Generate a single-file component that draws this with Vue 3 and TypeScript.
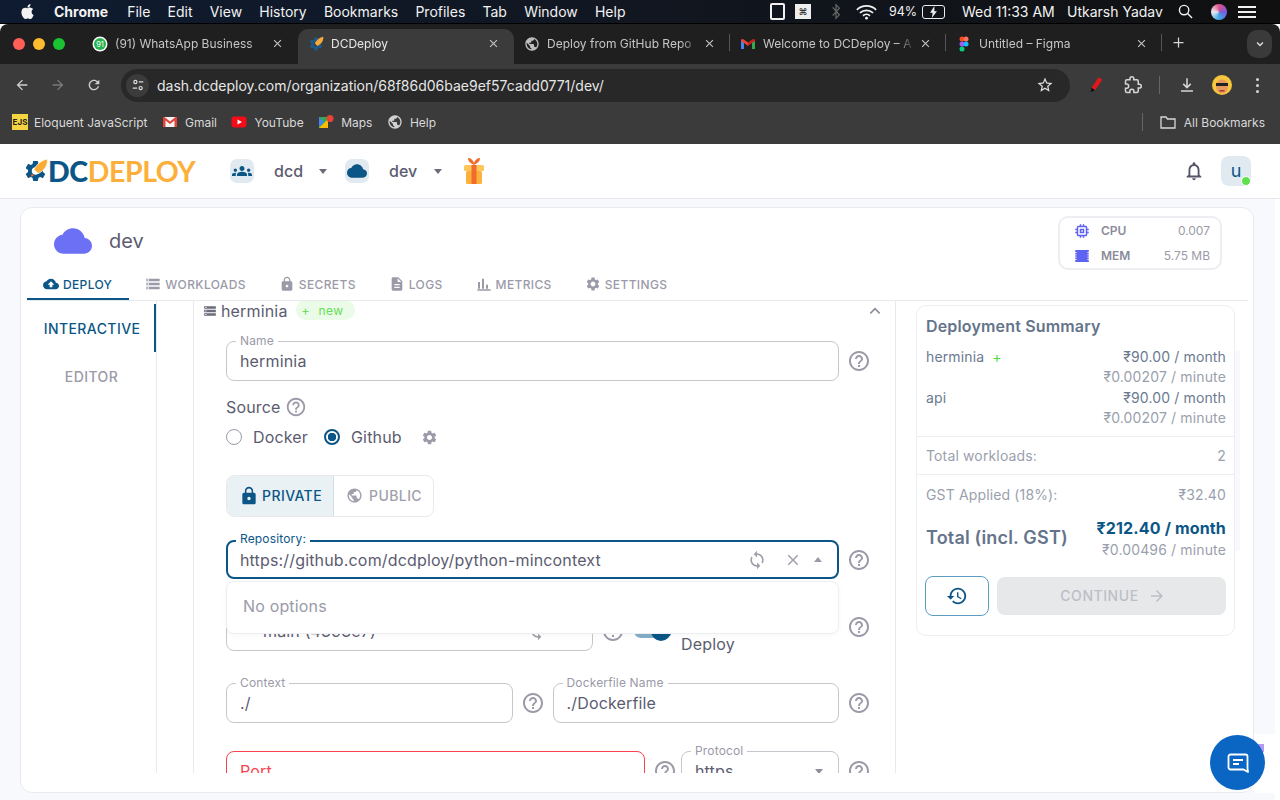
<script setup lang="ts">
const icons = {
  apple: 'M12.152 6.896c-.948 0-2.415-1.078-3.96-1.04-2.04.027-3.91 1.183-4.961 3.014-2.117 3.675-.546 9.103 1.519 12.09 1.013 1.454 2.208 3.09 3.792 3.039 1.52-.065 2.09-.987 3.935-.987 1.831 0 2.35.987 3.96.948 1.637-.026 2.676-1.48 3.676-2.948 1.156-1.688 1.636-3.325 1.662-3.415-.039-.013-3.182-1.221-3.22-4.857-.026-3.04 2.48-4.494 2.597-4.559-1.429-2.09-3.623-2.324-4.39-2.376-2-.156-3.675 1.09-4.61 1.09zM15.53 3.83c.843-1.012 1.4-2.427 1.245-3.83-1.207.052-2.662.805-3.532 1.818-.78.896-1.454 2.338-1.273 3.714 1.338.104 2.715-.688 3.559-1.701',
  cloud: 'M19.35 10.04C18.67 6.59 15.64 4 12 4 9.11 4 6.6 5.64 5.35 8.04 2.34 8.36 0 10.91 0 14c0 3.31 2.69 6 6 6h13c2.76 0 5-2.24 5-5 0-2.64-2.05-4.78-4.65-4.96z',
  groups: 'M12 12.75c1.63 0 3.07.39 4.24.9 1.08.48 1.76 1.56 1.76 2.73V18H6v-1.61c0-1.18.68-2.26 1.76-2.73 1.17-.52 2.61-.91 4.24-.91zM4 13c1.1 0 2-.9 2-2s-.9-2-2-2-2 .9-2 2 .9 2 2 2zm1.13 1.1c-.37-.06-.74-.1-1.13-.1-.99 0-1.93.21-2.78.58C.48 14.9 0 15.62 0 16.43V18h4.5v-1.61c0-.83.23-1.61.63-2.29zM20 13c1.1 0 2-.9 2-2s-.9-2-2-2-2 .9-2 2 .9 2 2 2zm4 3.43c0-.81-.48-1.53-1.22-1.85-.85-.37-1.79-.58-2.78-.58-.39 0-.76.04-1.13.1.4.68.63 1.46.63 2.29V18H24v-1.57zM12 6c1.66 0 3 1.34 3 3s-1.34 3-3 3-3-1.34-3-3 1.34-3 3-3z',
  upload: 'M19.35 10.04C18.67 6.59 15.64 4 12 4 9.11 4 6.6 5.64 5.35 8.04 2.34 8.36 0 10.91 0 14c0 3.31 2.69 6 6 6h13c2.76 0 5-2.24 5-5 0-2.64-2.05-4.78-4.65-4.96zM14 13v4h-4v-4H7l5-5 5 5h-3z',
  storage: 'M2 20h20v-4H2v4zm2-3h2v2H4v-2zM2 4v4h20V4H2zm4 3H4V5h2v2zm-4 7h20v-4H2v4zm2-3h2v2H4v-2z',
  lock: 'M18 8h-1V6c0-2.76-2.24-5-5-5S7 3.24 7 6v2H6c-1.1 0-2 .9-2 2v10c0 1.1.9 2 2 2h12c1.1 0 2-.9 2-2V10c0-1.1-.9-2-2-2zm-6 9c-1.1 0-2-.9-2-2s.9-2 2-2 2 .9 2 2-.9 2-2 2zm3.1-9H8.9V6c0-1.71 1.39-3.1 3.1-3.1 1.71 0 3.1 1.39 3.1 3.1v2z',
  logs: 'M14 2H6c-1.1 0-1.99.9-1.99 2L4 20c0 1.1.89 2 1.99 2H18c1.1 0 2-.9 2-2V8l-6-6zm2 16H8v-2h8v2zm0-4H8v-2h8v2zm-3-5V3.5L18.5 9H13z',
  metrics: 'M2 20h20v2H2zM3 9h3v10H3zM9 4h3v15H9zM15 13h3v6h-3z',
  settings: 'M19.14 12.94c.04-.3.06-.61.06-.94 0-.32-.02-.64-.07-.94l2.03-1.58c.18-.14.23-.41.12-.61l-1.92-3.32c-.12-.22-.37-.29-.59-.22l-2.39.96c-.5-.38-1.03-.7-1.62-.94l-.36-2.54c-.04-.24-.24-.41-.48-.41h-3.84c-.24 0-.43.17-.47.41l-.36 2.54c-.59.24-1.13.57-1.62.94l-2.39-.96c-.22-.08-.47 0-.59.22L2.74 8.87c-.12.21-.08.47.12.61l2.03 1.58c-.05.3-.09.63-.09.94s.02.64.07.94l-2.03 1.58c-.18.14-.23.41-.12.61l1.92 3.32c.12.22.37.29.59.22l2.39-.96c.5.38 1.03.7 1.62.94l.36 2.54c.05.24.24.41.48.41h3.84c.24 0 .44-.17.47-.41l.36-2.54c.59-.24 1.13-.56 1.62-.94l2.39.96c.22.08.47 0 .59-.22l1.92-3.32c.12-.22.07-.47-.12-.61l-2.01-1.58zM12 15.6c-1.98 0-3.6-1.62-3.6-3.6s1.62-3.6 3.6-3.6 3.6 1.62 3.6 3.6-1.62 3.6-3.6 3.6z',
  help: 'M11 18h2v-2h-2v2zm1-16C6.48 2 2 6.48 2 12s4.48 10 10 10 10-4.48 10-10S17.52 2 12 2zm0 18c-4.41 0-8-3.59-8-8s3.59-8 8-8 8 3.59 8 8-3.59 8-8 8zm0-14c-2.21 0-4 1.79-4 4h2c0-1.1.9-2 2-2s2 .9 2 2c0 2-3 1.75-3 5h2c0-2.25 3-2.5 3-5 0-2.21-1.79-4-4-4z',
  globe: 'M12 2C6.48 2 2 6.48 2 12s4.48 10 10 10 10-4.48 10-10S17.52 2 12 2zm-1 17.93c-3.95-.49-7-3.85-7-7.93 0-.62.08-1.21.21-1.79L9 15v1c0 1.1.9 2 2 2v1.93zm6.9-2.54c-.26-.81-1-1.39-1.9-1.39h-1v-3c0-.55-.45-1-1-1H8v-2h2c.55 0 1-.45 1-1V7h2c1.1 0 2-.9 2-2v-.41c2.93 1.19 5 4.06 5 7.41 0 2.08-.8 3.97-2.1 5.39z',
  history: 'M13 3c-4.97 0-9 4.03-9 9H1l3.89 3.89.07.14L9 12H6c0-3.87 3.13-7 7-7s7 3.13 7 7-3.13 7-7 7c-1.93 0-3.68-.79-4.94-2.06l-1.42 1.42C8.27 19.99 10.51 21 13 21c4.97 0 9-4.03 9-9s-4.03-9-9-9zm-1 5v5l4.28 2.54.72-1.21-3.5-2.08V8H12z',
  sync: 'M12 4V1L8 5l4 4V6c3.31 0 6 2.69 6 6 0 1.01-.25 1.97-.7 2.8l1.46 1.46C19.54 15.03 20 13.57 20 12c0-4.42-3.58-8-8-8zm0 14c-3.31 0-6-2.69-6-6 0-1.01.25-1.97.7-2.8L5.24 7.74C4.46 8.97 4 10.43 4 12c0 4.42 3.58 8 8 8v3l4-4-4-4v3z',
  bell: 'M12 22c1.1 0 2-.9 2-2h-4c0 1.1.9 2 2 2zm6-6v-5c0-3.07-1.63-5.64-4.5-6.32V4c0-.83-.67-1.5-1.5-1.5s-1.5.67-1.5 1.5v.68C7.64 5.36 6 7.92 6 11v5l-2 2v1h16v-1l-2-2zm-2 1H8v-6c0-2.48 1.51-4.5 4-4.5s4 2.02 4 4.5v6z',
  close: 'M19 6.41 17.59 5 12 10.59 6.41 5 5 6.41 10.59 12 5 17.59 6.41 19 12 13.41 17.59 19 19 17.59 13.41 12z',
  arrow: 'M12 4l-1.41 1.41L16.17 11H4v2h12.17l-5.58 5.59L12 20l8-8z',
  cpu: 'M15 9H9v6h6V9zm-2 4h-2v-2h2v2zm8-2V9h-2V7c0-1.1-.9-2-2-2h-2V3h-2v2h-2V3H9v2H7c-1.1 0-2 .9-2 2v2H3v2h2v2H3v2h2v2c0 1.1.9 2 2 2h2v2h2v-2h2v2h2v-2h2c1.1 0 2-.9 2-2v-2h2v-2h-2v-2h2zm-4 6H7V7h10v10z',
  mem: 'M3 4h18v3h-2v1h2v2h-2v1h2v2h-2v1h2v2h-2v1h2v3H3v-3h2v-1H3v-2h2v-1H3v-2h2v-1H3V8h2V7H3z',
  star: 'M22 9.24l-7.19-.62L12 2 9.19 8.63 2 9.24l5.46 4.73L5.82 21 12 17.27 18.18 21l-1.63-7.03L22 9.24zM12 15.4l-3.76 2.27 1-4.28-3.32-2.88 4.38-.38L12 6.1l1.71 4.04 4.38.38-3.32 2.88 1 4.28L12 15.4z',
  back: 'M20 11H7.83l5.59-5.59L12 4l-8 8 8 8 1.41-1.41L7.83 13H20v-2z',
  reload: 'M17.65 6.35C16.2 4.9 14.21 4 12 4c-4.42 0-7.99 3.58-7.99 8s3.57 8 7.99 8c3.73 0 6.84-2.55 7.73-6h-2.08c-.82 2.33-3.04 4-5.65 4-3.31 0-6-2.69-6-6s2.69-6 6-6c1.66 0 3.14.69 4.22 1.78L13 11h7V4l-2.35 2.35z',
  ext: 'M20.5 11H19V7c0-1.1-.9-2-2-2h-4V3.5C13 2.12 11.88 1 10.5 1S8 2.12 8 3.5V5H4c-1.1 0-1.99.9-1.99 2v3.8H3.5c1.49 0 2.7 1.21 2.7 2.7s-1.21 2.7-2.7 2.7H2V20c0 1.1.9 2 2 2h3.8v-1.5c0-1.49 1.21-2.7 2.7-2.7 1.49 0 2.7 1.21 2.7 2.7V22H17c1.1 0 2-.9 2-2v-4h1.5c1.38 0 2.5-1.12 2.5-2.5S21.88 11 20.5 11z',
}

const menus = ['File', 'Edit', 'View', 'History', 'Bookmarks', 'Profiles', 'Tab', 'Window', 'Help']

const chromeTabs = [
  { title: '(91) WhatsApp Business', kind: 'wa', active: false },
  { title: 'DCDeploy', kind: 'dc', active: true },
  { title: 'Deploy from GitHub Repo', kind: 'globe', active: false },
  { title: 'Welcome to DCDeploy – A', kind: 'gmail', active: false },
  { title: 'Untitled – Figma', kind: 'figma', active: false },
]

const navTabs = [
  { label: 'DEPLOY', icon: icons.upload, active: true },
  { label: 'WORKLOADS', icon: icons.storage, active: false },
  { label: 'SECRETS', icon: icons.lock, active: false },
  { label: 'LOGS', icon: icons.logs, active: false },
  { label: 'METRICS', icon: icons.metrics, active: false },
  { label: 'SETTINGS', icon: icons.settings, active: false },
]
</script>

<template>
  <div class="screen">
    <div class="mac-bar">
      <svg class="apple" viewBox="0 0 24 24"><path :d="icons.apple" /></svg>
      <strong class="mac-app">Chrome</strong>
      <span v-for="m in menus" :key="m" class="mac-menu">{{ m }}</span>
      <div class="mac-right">
        <span class="mac-rect"></span>
        <span class="mac-cmd">⌘</span>
        <svg class="mac-bt" viewBox="0 0 12 20"><path d="M2 5l8 9-4 4V2l4 4-8 9" /></svg>
        <svg class="mac-wifi" viewBox="0 0 24 18"><path d="M1 6.5a16 16 0 0 1 22 0M4.5 10a11 11 0 0 1 15 0M8 13.3a6 6 0 0 1 8 0" /><circle cx="12" cy="16" r="1.6" /></svg>
        <span class="mac-pct">94%</span>
        <span class="mac-batt"><svg viewBox="0 0 10 14"><path d="M6 0L1 8h3l-1 6 6-8H6z" /></svg></span>
        <span class="mac-time">Wed 11:33 AM</span>
        <span class="mac-user">Utkarsh Yadav</span>
        <svg class="mac-search" viewBox="0 0 16 16"><circle cx="6.5" cy="6.5" r="5" /><path d="M10.2 10.2L15 15" /></svg>
        <span class="mac-siri"></span>
        <span class="mac-ctrl"><i></i><i></i><i></i></span>
      </div>
    </div>

    <div class="tab-strip">
      <div class="lights"><i class="red"></i><i class="amber"></i><i class="green"></i></div>
      <div v-for="t in chromeTabs" :key="t.title" class="ctab" :class="{ active: t.active }">
        <svg v-if="t.kind === 'wa'" class="fav" viewBox="0 0 16 16">
          <circle cx="8" cy="8" r="7.5" fill="#fff" />
          <circle cx="8" cy="8" r="6" fill="#25b34b" />
          <text x="8" y="10.6" class="fav-num">91</text>
        </svg>
        <svg v-else-if="t.kind === 'dc'" class="fav" viewBox="0 0 24 24">
          <path :d="icons.settings" fill="#1c5a8c" />
          <path d="M23 1c.5 6-3 11-9 14l-4-4C13 6 17 2 23 1z" fill="#f5a93a" />
        </svg>
        <svg v-else-if="t.kind === 'globe'" class="fav" viewBox="0 0 24 24"><path :d="icons.globe" fill="#bdbdbd" /></svg>
        <svg v-else-if="t.kind === 'gmail'" class="fav" viewBox="0 0 16 16">
          <path d="M1 3.500V13h3V7l4 3V6.500L3 3z" fill="#ea4335" />
          <path d="M15 3.500V13h-3V7L8 10V6.500L13 3z" fill="#c5221f" />
          <path d="M1 13V5l3 2v6z" fill="#4285f4" />
          <path d="M15 13V5l-3 2v6z" fill="#34a853" />
        </svg>
        <svg v-else class="fav" viewBox="0 0 16 16">
          <circle cx="6" cy="3" r="2.500" fill="#f24e1e" />
          <circle cx="10" cy="3" r="2.500" fill="#ff7262" />
          <circle cx="6" cy="8" r="2.500" fill="#a259ff" />
          <circle cx="10" cy="8" r="2.500" fill="#1abcfe" />
          <circle cx="6" cy="13" r="2.500" fill="#0acf83" />
        </svg>
        <span class="ctab-title">{{ t.title }}</span>
        <svg class="ctab-close" viewBox="0 0 24 24"><path :d="icons.close" /></svg>
        <span v-if="!t.active && t.kind !== 'wa'" class="ctab-sep"></span>
      </div>
      <svg class="ctab-plus" viewBox="0 0 24 24"><path d="M11 4h2v7h7v2h-7v7h-2v-7H4v-2h7z" /></svg>
      <span class="ctab-more"><svg viewBox="0 0 24 24"><path d="M7 9.500l5 5 5-5" /></svg></span>
    </div>

    <div class="toolbar">
      <svg class="tool-ic" viewBox="0 0 24 24"><path :d="icons.back" /></svg>
      <svg class="tool-ic dim" viewBox="0 0 24 24"><path :d="icons.back" transform="rotate(180 12 12)" /></svg>
      <svg class="tool-ic" viewBox="0 0 24 24"><path :d="icons.reload" /></svg>
      <div class="url">
        <span class="url-tune"><svg viewBox="0 0 16 16"><circle cx="5" cy="4.500" r="1.800" /><path d="M9 4.500h5M2 11.500h5" /><circle cx="11" cy="11.500" r="1.800" /></svg></span>
        <span class="url-text">dash.dcdeploy.com/organization/68f86d06bae9ef57cadd0771/dev/</span>
        <svg class="url-star" viewBox="0 0 24 24"><path :d="icons.star" /></svg>
      </div>
      <svg class="pen" viewBox="0 0 16 20"><path d="M11 1l4 3-8 12-4-3z" fill="#e3161c" /><path d="M3 13l4 3-5 2z" fill="#111" /></svg>
      <svg class="tool-ic ext" viewBox="0 0 24 24"><path :d="icons.ext" fill="none" stroke="#d6d6d6" stroke-width="2" /></svg>
      <span class="tool-sep"></span>
      <svg class="tool-ic dl" viewBox="0 0 24 24"><path d="M12 3v12M7 10.500l5 5 5-5M4 20h16" fill="none" stroke="#d6d6d6" stroke-width="2" /></svg>
      <svg class="avatar-pic" viewBox="0 0 20 20">
        <circle cx="10" cy="10" r="10" fill="#f6c63e" />
        <ellipse cx="10" cy="11.500" rx="6" ry="7" fill="#e89a5c" />
        <path d="M4 8h12v3H4z" fill="#222" />
        <path d="M7.500 15h5v1.500h-5z" fill="#a33" />
      </svg>
      <span class="tool-dots"><i></i><i></i><i></i></span>
    </div>

    <div class="bookmarks">
      <span class="bm"><span class="ejs">EJS</span>Eloquent JavaScript</span>
      <span class="bm"><svg class="bm-ic" viewBox="0 0 16 16"><path d="M1 3h14v10H1z" fill="#f4f4f4" /><path d="M1 3v10h2.500V6.500L8 10l4.500-3.500V13H15V3h-1.500L8 7.500 2.500 3z" fill="#e0443a" /></svg>Gmail</span>
      <span class="bm"><svg class="bm-ic" viewBox="0 0 16 16"><rect x="0.500" y="2.500" width="15" height="11" rx="3" fill="#f40d18" /><path d="M6.500 5.500L11 8l-4.500 2.500z" fill="#fff" /></svg>YouTube</span>
      <span class="bm"><svg class="bm-ic" viewBox="0 0 16 16"><path d="M1 3h9v11H1z" fill="#34a853" /><path d="M1 14l9-9v9z" fill="#fbbc04" /><path d="M1 3l5 5-5 5z" fill="#4285f4" /><circle cx="12" cy="4.500" r="3.500" fill="#ea4335" /></svg>Maps</span>
      <span class="bm"><svg class="bm-ic" viewBox="0 0 24 24"><path :d="icons.globe" fill="#d0d0d0" /></svg>Help</span>
      <span class="bm-sep"></span>
      <span class="bm all"><svg class="bm-folder" viewBox="0 0 16 14"><path d="M1 2h5l1.500 2H15v9H1z" /></svg>All Bookmarks</span>
    </div>

    <div class="page">
      <header class="app-head">
        <div class="logo">
          <svg class="logo-mark" viewBox="0 0 24 24">
            <path :d="icons.settings" fill="#0b5686" />
            <path d="M23.500 0.500c.5 6-3 11-9 14l-4-4c3-5 7-9 13-10z" fill="#f9ab32" stroke="#fff" stroke-width="0.800" />
            <path d="M7.500 17.500l3-1-2-2z" fill="#f26d21" />
          </svg>
          <span class="logo-text"><b>DC</b><em>DEPLOY</em></span>
        </div>
        <span class="chip first"><svg viewBox="0 0 24 24"><path :d="icons.groups" /></svg></span>
        <span class="org">dcd</span>
        <span class="caret"></span>
        <span class="chip"><svg viewBox="0 0 24 24"><path :d="icons.cloud" /></svg></span>
        <span class="org">dev</span>
        <span class="caret"></span>
        <svg class="gift" viewBox="0 0 22 28">
          <path d="M11 8C8 6 5 5 5 1c3 0 5 2 6 5 1-3 3-5 6-5 0 4-3 5-6 7z" fill="#f26b2a" />
          <rect x="1" y="8" width="20" height="6" rx="1.500" fill="#fbc65a" />
          <rect x="3" y="14" width="16" height="13" rx="1.500" fill="#fbb13c" />
          <rect x="8.500" y="8" width="5" height="19" fill="#f26b2a" />
        </svg>
        <svg class="bell" viewBox="0 0 24 24"><path :d="icons.bell" /></svg>
        <span class="user">u<i></i></span>
      </header>

      <section class="card">
        <div class="card-top">
          <svg class="env-cloud" viewBox="0 0 24 24"><path :d="icons.cloud" /></svg>
          <span class="env-name">dev</span>
          <div class="usage">
            <svg viewBox="0 0 24 24"><path :d="icons.cpu" /></svg>
            <b>CPU</b>
            <span>0.007</span>
            <svg viewBox="0 0 24 24"><path :d="icons.mem" /></svg>
            <b>MEM</b>
            <span>5.75 MB</span>
          </div>
        </div>

        <nav class="nav-tabs">
          <div v-for="t in navTabs" :key="t.label" class="nav-tab" :class="{ active: t.active }">
            <svg viewBox="0 0 24 24"><path :d="t.icon" /></svg>
            {{ t.label }}
          </div>
        </nav>

        <div class="body">
          <aside class="side">
            <div class="side-item active">INTERACTIVE</div>
            <div class="side-item">EDITOR</div>
          </aside>

          <div class="form-col">
            <div class="form-inner">
              <div class="wl-head">
                <svg class="wl-ic" viewBox="0 0 24 24"><path :d="icons.storage" /></svg>
                <span>herminia</span>
                <span class="badge"><i>+</i> new</span>
                <svg class="wl-up" viewBox="0 0 24 24"><path d="M5 15.500l7-7 7 7" /></svg>
              </div>

              <div class="form">
                <div class="row name-row">
                  <div class="field"><label>Name</label>herminia</div>
                  <svg class="help" viewBox="0 0 24 24"><path :d="icons.help" /></svg>
                </div>

                <div class="source">
                  Source
                  <svg class="help" viewBox="0 0 24 24"><path :d="icons.help" /></svg>
                </div>
                <div class="radios">
                  <span class="radio"></span><span class="radio-label">Docker</span>
                  <span class="radio on"></span><span class="radio-label">Github</span>
                  <svg class="radio-gear" viewBox="0 0 24 24"><path :d="icons.settings" /></svg>
                </div>

                <div class="vis">
                  <div class="vis-btn on"><svg viewBox="0 0 24 24"><path :d="icons.lock" /></svg>PRIVATE</div>
                  <div class="vis-btn"><svg viewBox="0 0 24 24"><path :d="icons.globe" /></svg>PUBLIC</div>
                </div>

                <div class="row repo-row">
                  <div class="field focus">
                    <label>Repository:</label>
                    <span class="val">https://github.com/dcdploy/python-mincontext</span>
                    <svg class="f-ic sync" viewBox="0 0 24 24"><path :d="icons.sync" /></svg>
                    <svg class="f-ic x" viewBox="0 0 24 24"><path :d="icons.close" /></svg>
                    <span class="caret up"></span>
                  </div>
                  <svg class="help" viewBox="0 0 24 24"><path :d="icons.help" /></svg>
                  <div class="dropdown">No options</div>
                </div>

                <div class="row branch-row">
                  <div class="field branch">
                    <span class="branch-dot"></span>
                    <span class="val">main (4393e7)</span>
                    <svg class="f-ic sync" viewBox="0 0 24 24"><path :d="icons.sync" /></svg>
                    <span class="caret light"></span>
                  </div>
                  <svg class="help" viewBox="0 0 24 24"><path :d="icons.help" /></svg>
                  <span class="toggle"><i></i></span>
                  <span class="auto">Auto<br />Deploy</span>
                  <svg class="help end" viewBox="0 0 24 24"><path :d="icons.help" /></svg>
                </div>

                <div class="row ctx-row">
                  <div class="field"><label>Context</label>./</div>
                  <svg class="help" viewBox="0 0 24 24"><path :d="icons.help" /></svg>
                  <div class="field"><label>Dockerfile Name</label>./Dockerfile</div>
                  <svg class="help" viewBox="0 0 24 24"><path :d="icons.help" /></svg>
                </div>

                <div class="row port-row">
                  <div class="field error"><span class="val">Port</span></div>
                  <svg class="help" viewBox="0 0 24 24"><path :d="icons.help" /></svg>
                  <div class="field proto">
                    <label>Protocol</label>
                    <span class="val">https</span>
                    <span class="caret"></span>
                  </div>
                  <svg class="help" viewBox="0 0 24 24"><path :d="icons.help" /></svg>
                </div>
              </div>
            </div>
          </div>

          <aside class="summary">
            <h4>Deployment Summary</h4>
            <div class="s-list">
              <div class="s-item">
                <span>herminia <i class="plus">+</i></span>
                <div class="s-price"><span>₹90.00 / month</span><small>₹0.00207 / minute</small></div>
              </div>
              <div class="s-item">
                <span>api</span>
                <div class="s-price"><span>₹90.00 / month</span><small>₹0.00207 / minute</small></div>
              </div>
            </div>
            <div class="s-line"><span>Total workloads:</span><span>2</span></div>
            <div class="s-gst"><span>GST Applied (18%):</span><span>₹32.40</span></div>
            <div class="s-total">
              <b>Total (incl. GST)</b>
              <div class="s-price"><strong>₹212.40 / month</strong><small>₹0.00496 / minute</small></div>
            </div>
            <div class="s-actions">
              <button class="hist"><svg viewBox="0 0 24 24"><path :d="icons.history" /></svg></button>
              <button class="cont">CONTINUE<svg viewBox="0 0 24 24"><path :d="icons.arrow" /></svg></button>
            </div>
            <span class="s-scroll"></span>
          </aside>
        </div>
      </section>

      <div class="chat-back"></div>
      <button class="chat">
        <svg viewBox="0 0 24 24"><path d="M4.500 3.500h15a2 2 0 0 1 2 2v12l.5 3.500-4.500-2.500h-13a2 2 0 0 1-2-2v-11a2 2 0 0 1 2-2z" /><path d="M7 9h10M7 13h6" /></svg>
      </button>
    </div>
  </div>
</template>

<style>
html,
body {
  margin: 0;
  overflow: hidden;
  background: #fff;
}
</style>

<style scoped>
.screen {
  width: 1280px;
  height: 800px;
  display: flex;
  flex-direction: column;
  overflow: hidden;
  font-family: Inter, "Liberation Sans", sans-serif;
}

/* mac menu bar */
.mac-bar {
  height: 23px;
  flex: none;
  display: flex;
  align-items: center;
  padding-left: 20px;
  background: linear-gradient(90deg, #0e1b30 0%, #111722 45%, #101010 100%);
  color: #f2f2f2;
  font-size: 14px;
  border-bottom: 1px solid #000;
}
.apple {
  width: 15px;
  height: 17px;
  fill: #f2f2f2;
  margin-right: 19px;
}
.mac-app {
  font-weight: 700;
  margin-right: 19px;
}
.mac-menu {
  margin-right: 17.200px;
}
.mac-right {
  margin-left: auto;
  display: flex;
  align-items: center;
  height: 100%;
}
.mac-rect {
  width: 11px;
  height: 13px;
  border: 2px solid #f2f2f2;
  border-radius: 2px;
  margin-right: 10px;
}
.mac-cmd {
  width: 16px;
  height: 15px;
  background: #eee;
  color: #222;
  font-size: 9px;
  line-height: 16px;
  text-align: center;
  margin-right: 20px;
}
.mac-bt {
  width: 10px;
  height: 17px;
  fill: none;
  stroke: #666;
  stroke-width: 1.500;
  margin-right: 15px;
}
.mac-wifi {
  width: 21px;
  height: 16px;
  fill: none;
  stroke: #f2f2f2;
  stroke-width: 2;
  margin-right: 12px;
}
.mac-wifi circle {
  fill: #f2f2f2;
  stroke: none;
}
.mac-pct {
  font-size: 12.500px;
  margin-right: 5px;
}
.mac-batt {
  width: 21px;
  height: 12px;
  border: 1px solid #eee;
  border-radius: 3px;
  margin-right: 17px;
  display: flex;
  justify-content: center;
  align-items: center;
}
.mac-batt svg {
  width: 9px;
  height: 12px;
  fill: #eee;
}
.mac-time {
  margin-right: 14px;
  width: 91px;
  white-space: nowrap;
}
.mac-user {
  margin-right: 17px;
  width: 94px;
  white-space: nowrap;
}
.mac-search {
  width: 15px;
  height: 15px;
  fill: none;
  stroke: #f2f2f2;
  stroke-width: 1.500;
  margin-right: 18px;
}
.mac-siri {
  width: 16px;
  height: 16px;
  border-radius: 50%;
  background: conic-gradient(#e0508a, #7a5be0, #3fa7e8, #e8e8f0, #e0508a);
  margin-right: 11px;
}
.mac-ctrl {
  width: 18px;
  margin-right: 24px;
  display: flex;
  flex-direction: column;
  gap: 3px;
}
.mac-ctrl i {
  display: block;
  height: 2px;
  background: #f2f2f2;
}

/* chrome */
.tab-strip {
  height: 35px;
  flex: none;
  padding-top: 5px;
  background: #1f1f1f;
  display: flex;
  align-items: stretch;
  position: relative;
  border-radius: 8px 8px 0 0;
}
.lights {
  width: 82px;
  flex: none;
  display: flex;
  align-items: center;
  gap: 8px;
  padding-left: 13px;
  box-sizing: border-box;
  margin-top: -5px;
}
.lights i {
  width: 12px;
  height: 12px;
  border-radius: 50%;
}
.red {
  background: #ff5f57;
}
.amber {
  background: #febc2e;
}
.green {
  background: #19c332;
}
.ctab {
  width: 216px;
  flex: none;
  box-sizing: border-box;
  display: flex;
  align-items: center;
  padding: 0 12px 6px 10px;
  position: relative;
  color: #c6c6c6;
  font-size: 12px;
  border-radius: 10px 10px 0 0;
}
.ctab.active {
  background: #3b3b3b;
  color: #e8e8e8;
}
.fav {
  width: 16px;
  height: 16px;
  flex: none;
}
.fav-num {
  font-size: 7.500px;
  fill: #fff;
  text-anchor: middle;
  font-family: Inter, sans-serif;
}
.ctab-title {
  margin-left: 7px;
  width: 152px;
  white-space: nowrap;
  overflow: hidden;
  -webkit-mask-image: linear-gradient(90deg, #000 88%, transparent);
  mask-image: linear-gradient(90deg, #000 88%, transparent);
}
.ctab-close {
  width: 13px;
  height: 13px;
  margin-left: 4px;
  fill: #c6c6c6;
}
.ctab-sep {
  position: absolute;
  right: 0;
  top: 5px;
  height: 17px;
  width: 1px;
  background: #555;
}
.ctab-plus {
  width: 15px;
  height: 15px;
  margin: 6px 0 0 9px;
  fill: #d6d6d6;
}
.ctab-more {
  position: absolute;
  right: 8px;
  top: 6px;
  width: 25px;
  height: 28px;
  border-radius: 10px;
  background: #3a3a3a;
  display: flex;
  align-items: center;
  justify-content: center;
}
.ctab-more svg {
  width: 14px;
  height: 14px;
  fill: none;
  stroke: #ddd;
  stroke-width: 2.500;
}

.toolbar {
  height: 42px;
  flex: none;
  background: #3b3b3b;
  display: flex;
  align-items: center;
  padding: 0 14px 0 14px;
  box-sizing: border-box;
}
.tool-ic {
  width: 16px;
  height: 16px;
  margin-right: 20px;
  fill: #cfcfcf;
  flex: none;
}
.tool-ic.dim {
  fill: #7b7b7b;
}
.url {
  width: 949px;
  flex: none;
  height: 33px;
  margin-left: -1px;
  border-radius: 17px;
  background: #282828;
  display: flex;
  align-items: center;
  padding: 0 16px 0 5px;
  box-sizing: border-box;
}
.url-tune {
  width: 23px;
  height: 23px;
  border-radius: 50%;
  background: #3b3b3b;
  display: flex;
  align-items: center;
  justify-content: center;
  margin-right: 8px;
}
.url-tune svg {
  width: 14px;
  height: 14px;
  fill: none;
  stroke: #ddd;
  stroke-width: 1.400;
}
.url-text {
  color: #e6e6e6;
  font-size: 14px;
  flex: 1;
  white-space: nowrap;
}
.url-star {
  width: 18px;
  height: 18px;
  fill: #e0e0e0;
}
.pen {
  width: 14px;
  height: 18px;
  margin-left: 19px;
}
.tool-ic.ext {
  margin: 0 0 0 21px;
  width: 18px;
  height: 18px;
}
.tool-sep {
  width: 1px;
  height: 18px;
  background: #666;
  margin: 0 18px 0 17px;
}
.tool-ic.dl {
  width: 18px;
  height: 18px;
  margin-right: 16px;
}
.avatar-pic {
  width: 20px;
  height: 20px;
  margin-right: 24px;
}
.tool-dots {
  display: flex;
  flex-direction: column;
  gap: 3px;
}
.tool-dots i {
  width: 3px;
  height: 3px;
  border-radius: 50%;
  background: #d6d6d6;
}

.bookmarks {
  height: 38px;
  flex: none;
  background: #3b3b3b;
  display: flex;
  align-items: center;
  padding: 0 15px 6px 12px;
  box-sizing: border-box;
  color: #d9d9d9;
  font-size: 12px;
}
.bm {
  display: flex;
  align-items: center;
  margin-right: 14.500px;
  white-space: nowrap;
}
.ejs {
  width: 16px;
  height: 16px;
  background: #f5d442;
  color: #222;
  font-size: 8px;
  font-weight: 700;
  line-height: 16px;
  text-align: center;
  margin-right: 6px;
}
.bm-ic {
  width: 16px;
  height: 16px;
  margin-right: 7px;
}
.bm-sep {
  width: 1px;
  height: 18px;
  background: #666;
  margin-left: auto;
  margin-right: 17px;
}
.bm.all {
  margin-right: 0;
}
.bm-folder {
  width: 16px;
  height: 14px;
  fill: none;
  stroke: #d9d9d9;
  stroke-width: 1.300;
  margin-right: 8px;
}

/* dcdeploy page */
.page {
  flex: 1;
  min-height: 0;
  background: #f8f9fc;
  margin-right: 5px;
  position: relative;
}
.app-head {
  height: 54px;
  margin-right: -5px;
  background: #fff;
  border-bottom: 1px solid #e5e7eb;
  display: flex;
  align-items: center;
  padding: 0 29px 0 24px;
  color: #5c5c70;
}
.logo {
  width: 206px;
  flex: none;
  display: flex;
  align-items: center;
}
.logo-mark {
  width: 25px;
  height: 26px;
  margin-left: -1px;
  flex: none;
}
.logo-text {
  font-family: Lato, Inter, sans-serif;
  font-size: 28.500px;
  letter-spacing: -0.400px;
  line-height: 30px;
  white-space: nowrap;
}
.logo-text b {
  font-weight: 900;
  color: #0b5686;
}
.logo-text em {
  font-style: normal;
  font-weight: 700;
  color: #fbb03b;
}
.chip {
  width: 24px;
  height: 24px;
  border-radius: 7px;
  background: #e1eaf0;
  display: flex;
  align-items: center;
  justify-content: center;
  margin-left: 18px;
  flex: none;
}
.chip.first {
  margin-left: 0;
}
.chip svg {
  width: 20px;
  height: 20px;
  fill: #0b5686;
}
.org {
  font-size: 16px;
  font-weight: 500;
  margin-left: 20px;
  width: 29px;
}
.caret {
  width: 0;
  height: 0;
  border-left: 4.500px solid transparent;
  border-right: 4.500px solid transparent;
  border-top: 5px solid #6b6b7b;
  margin-left: 16px;
  flex: none;
}
.gift {
  width: 22px;
  height: 28px;
  margin-left: 21px;
}
.bell {
  width: 22px;
  height: 22px;
  fill: #55556a;
  margin-left: auto;
  margin-right: 16px;
}
.user {
  width: 30px;
  height: 30px;
  border-radius: 8px;
  background: #e1eaf0;
  color: #0b5686;
  font-size: 18px;
  line-height: 29px;
  text-align: center;
  position: relative;
}
.user i {
  position: absolute;
  right: 0;
  bottom: 0;
  width: 8px;
  height: 8px;
  border-radius: 50%;
  background: #5ee04c;
  border: 1px solid #fff;
}

.card {
  position: absolute;
  left: 20px;
  top: 63px;
  width: 1234px;
  height: 586px;
  box-sizing: border-box;
  background: #fff;
  border: 1px solid #e8eaee;
  border-radius: 12px;
  padding: 0 5px 19px 6px;
  display: flex;
  flex-direction: column;
}
.card-top {
  height: 61px;
  flex: none;
  display: flex;
  align-items: center;
  color: #5c5c70;
  padding: 0 26px 0 27px;
  box-sizing: border-box;
}
.env-cloud {
  width: 38px;
  height: 38px;
  fill: #6c70f5;
  margin-top: 5px;
}
.env-name {
  font-size: 20px;
  margin-left: 17px;
  margin-top: 4px;
}
.usage {
  margin-left: auto;
  margin-top: 9px;
  width: 164px;
  height: 54px;
  box-sizing: border-box;
  border: 2px solid #eceef1;
  border-radius: 10px;
  display: grid;
  grid-template-columns: 18px 34px 1fr;
  column-gap: 10px;
  align-items: center;
  align-content: center;
  row-gap: 7px;
  padding: 0 10px 0 13px;
  font-size: 12px;
  color: #9a9aa8;
}
.usage svg {
  width: 18px;
  height: 18px;
  fill: #5f63f2;
}
.usage b {
  font-weight: 600;
  color: #8b8b99;
}
.usage span {
  text-align: right;
  white-space: nowrap;
}

.nav-tabs {
  height: 31px;
  flex: none;
  display: flex;
  border-bottom: 1px solid #e8eaee;
  position: relative;
}
.nav-tab {
  height: 31px;
  box-sizing: border-box;
  padding: 1px 17px 0;
  display: flex;
  align-items: center;
  gap: 5px;
  font-size: 12px;
  font-weight: 500;
  letter-spacing: 0.030em;
  color: #9a9aa8;
  white-space: nowrap;
  border-bottom: 2px solid transparent;
}
.nav-tab svg {
  width: 16px;
  height: 16px;
  margin: 0 -1px;
  fill: currentColor;
  flex: none;
}
.nav-tab.active {
  color: #0b5686;
  border-bottom-color: #0b5686;
}

.body {
  flex: 1;
  min-height: 0;
  display: flex;
  position: relative;
}
.side {
  width: 130px;
  flex: none;
  border-right: 1px solid #e8eaee;
  box-sizing: border-box;
  padding-top: 3px;
}
.side-item {
  height: 48px;
  display: flex;
  align-items: center;
  justify-content: center;
  font-size: 14px;
  font-weight: 500;
  letter-spacing: 0.030em;
  color: #9a9aa8;
}
.side-item.active {
  color: #0b5686;
  border-right: 2px solid #0b5686;
  padding-left: 3px;
  box-sizing: border-box;
}

.form-col {
  width: 739px;
  flex: none;
  overflow: hidden;
  border-right: 1px solid #e8eaee;
  box-sizing: border-box;
  padding-left: 36px;
}
.form-inner {
  border-left: 1px solid #e8eaee;
  padding: 0 26px 0 9px;
  color: #5c5c70;
  min-height: 100%;
  box-sizing: border-box;
  letter-spacing: 0.010em;
}
.wl-head {
  height: 20px;
  display: flex;
  align-items: center;
  font-size: 16px;
}
.wl-ic {
  width: 14px;
  height: 14px;
  fill: #6b6b7b;
  margin-right: 4px;
}
.badge {
  margin-left: 8px;
  height: 20px;
  padding: 0 12px 0 6px;
  border-radius: 10px;
  background: #eafbe7;
  color: #67dd55;
  font-size: 12px;
  line-height: 21px;
  letter-spacing: 0.030em;
  margin-top: -2px;
}
.badge i {
  font-style: normal;
  margin-right: 5px;
}
.wl-up {
  width: 16px;
  height: 16px;
  fill: none;
  stroke: #8d8d9b;
  stroke-width: 2.500;
  margin-left: auto;
  margin-right: -14px;
}
.form {
  padding-left: 23px;
}
.row {
  display: flex;
  align-items: center;
  gap: 10px;
  position: relative;
}
.name-row {
  margin-top: 20px;
}
.field {
  flex: 1;
  min-width: 0;
  height: 40px;
  box-sizing: border-box;
  border: 1px solid #c6c6cc;
  border-radius: 8px;
  padding: 0 13px;
  display: flex;
  align-items: center;
  font-size: 16px;
  color: #5c5c70;
  position: relative;
  white-space: nowrap;
}
.field label {
  position: absolute;
  left: 9px;
  top: -8px;
  padding: 0 4px;
  background: #fff;
  font-size: 12px;
  line-height: 14px;
  color: #9a9aa8;
}
.val {
  flex: 1;
}
.help {
  width: 24px;
  height: 24px;
  fill: #9a9aa8;
  flex: none;
  margin: 0 -2px 0 -2px;
}
.source {
  display: flex;
  align-items: center;
  gap: 5px;
  font-size: 16px;
  height: 24px;
  margin-top: 14px;
}
.source .help {
  width: 22px;
  height: 22px;
  margin: 0 -1px;
}
.radios {
  display: flex;
  align-items: center;
  height: 24px;
  margin-top: 6px;
  font-size: 16px;
}
.radio {
  width: 16px;
  height: 16px;
  border: 1.500px solid #9a9aa8;
  border-radius: 50%;
  box-sizing: border-box;
  flex: none;
}
.radio.on {
  border: 2px solid #0b5686;
  background: radial-gradient(circle, #0b5686 0 4px, transparent 4.500px);
}
.radio-label {
  margin: 0 16px 0 11px;
}
.radio-gear {
  width: 17px;
  height: 17px;
  fill: #9a9aa8;
  margin-left: 3px;
}
.vis {
  margin-top: 26px;
  display: flex;
  width: 208px;
  height: 42px;
  box-sizing: border-box;
  border: 1px solid #e8eaee;
  border-radius: 8px;
  overflow: hidden;
  font-size: 14px;
  font-weight: 500;
  letter-spacing: 0.030em;
}
.vis-btn {
  display: flex;
  align-items: center;
  gap: 6px;
  padding: 0 12px 1px 12px;
  color: #a0a0ac;
  white-space: nowrap;
}
.vis-btn svg {
  width: 17px;
  height: 17px;
  fill: currentColor;
  flex: none;
}
.vis-btn.on {
  width: 107px;
  flex: none;
  box-sizing: border-box;
  background: #eaf1f5;
  color: #0b5686;
  border-right: 1px solid #d5dfe6;
  gap: 3px;
}
.vis-btn.on svg {
  width: 20px;
  height: 20px;
}
.repo-row {
  margin-top: 23px;
  z-index: 2;
}
.field.focus {
  height: 39px;
  border: 2px solid #0b5686;
  padding: 0 12px;
}
.field.focus label {
  left: 8px;
  top: -10px;
  color: #0b5686;
}
.f-ic {
  width: 20px;
  height: 20px;
  fill: #a0a0ac;
  flex: none;
}
.f-ic.x {
  margin-left: 17px;
  width: 18px;
  height: 18px;
}
.caret.up {
  border-top: 0;
  border-bottom: 5px solid #9a9aa8;
  margin-left: 12px;
  margin-right: 3px;
}
.caret.light {
  border-top-color: #c8c8d0;
  margin-left: 13px;
  margin-right: 10px;
}
.dropdown {
  position: absolute;
  left: 0;
  top: 41px;
  width: 613px;
  height: 53px;
  box-sizing: border-box;
  background: #fff;
  border: 1px solid #eceef1;
  border-radius: 8px;
  padding: 0 16px 3px;
  display: flex;
  align-items: center;
  font-size: 16px;
  color: #9a9aa8;
  box-shadow: 0 2px 6px rgba(0, 0, 0, 0.030);
}
.branch-row {
  margin-top: 27px;
}
.field.branch {
  flex: none;
  width: 367px;
}
.branch-dot {
  width: 6px;
  height: 6px;
  border-radius: 50%;
  background: #9a9aa8;
  margin: 0 15px 0 2px;
}
.toggle {
  width: 38px;
  height: 14px;
  border-radius: 7px;
  background: #85aec6;
  position: relative;
  flex: none;
  margin-left: 1px;
}
.toggle i {
  position: absolute;
  right: 1px;
  top: -3px;
  width: 20px;
  height: 20px;
  border-radius: 50%;
  background: #0b5686;
}
.auto {
  font-size: 16px;
  line-height: 24px;
  margin-left: -1px;
  padding-top: 2px;
  flex: 1;
  color: #5c5c70;
}
.help.end {
  margin-bottom: 8px;
}
.ctx-row {
  margin-top: 27px;
}
.port-row {
  margin-top: 28px;
  padding-bottom: 10px;
}
.field.error {
  flex: none;
  width: 419px;
  border-color: #f8444f;
  color: #f8444f;
}
.field.proto {
  flex: none;
  width: 158px;
  margin-left: -4px;
}
.proto .caret {
  border-top-color: #8d8d9b;
  margin-right: 2px;
}

.summary {
  width: 319px;
  height: 331px;
  flex: none;
  margin: 4px 0 0 20px;
  box-sizing: border-box;
  border: 1px solid #eceef1;
  border-radius: 10px;
  padding-top: 9px;
  color: #6b7a90;
  font-size: 14px;
  position: relative;
  letter-spacing: 0.010em;
}
.summary h4 {
  margin: 0 9px;
  font-size: 16px;
  line-height: 22px;
  font-weight: 600;
  color: #64748b;
  letter-spacing: 0.010em;
}
.s-list {
  margin-top: 10px;
  padding: 0 8px 7px 9px;
  border-bottom: 1px solid #eceef1;
}
.s-item {
  display: flex;
  justify-content: space-between;
  line-height: 20px;
  margin-bottom: 1px;
}
.plus {
  font-style: normal;
  color: #4be03a;
  margin-left: 4px;
}
.s-price {
  display: flex;
  flex-direction: column;
  align-items: flex-end;
}
.s-price small {
  font-size: 14px;
  color: #9a9fad;
}
.s-line {
  height: 37px;
  display: flex;
  align-items: center;
  justify-content: space-between;
  padding: 0 8px 0 9px;
  border-bottom: 1px solid #eceef1;
  color: #9a9fad;
}
.s-gst {
  display: flex;
  justify-content: space-between;
  padding: 10px 8px 0 9px;
  line-height: 20px;
  color: #9a9fad;
}
.s-total {
  display: flex;
  justify-content: space-between;
  align-items: center;
  padding: 12px 8px 0 9px;
}
.s-total b {
  font-size: 18px;
  font-weight: 600;
  color: #64748b;
  letter-spacing: 0.010em;
}
.s-total strong {
  font-size: 16px;
  line-height: 22px;
  font-weight: 700;
  color: #0b5686;
  letter-spacing: 0.010em;
}
.s-total small {
  margin-top: 2px;
}
.s-actions {
  display: flex;
  align-items: center;
  gap: 8px;
  padding: 18px 8px 0;
}
.hist {
  width: 64px;
  height: 40px;
  background: #fff;
  border: 1px solid #5c9cc2;
  border-radius: 8px;
  padding: 0;
  display: flex;
  align-items: center;
  justify-content: center;
}
.hist svg {
  width: 22px;
  height: 22px;
  fill: #0b5686;
}
.cont {
  width: 229px;
  height: 38px;
  background: #e7e8ea;
  border: 0;
  border-radius: 8px;
  color: #bcbfc6;
  font-family: inherit;
  font-size: 14px;
  font-weight: 500;
  letter-spacing: 0.040em;
  display: flex;
  align-items: center;
  justify-content: center;
  gap: 9px;
  padding: 0 0 1px 3px;
}
.cont svg {
  width: 18px;
  height: 18px;
  fill: #bcbfc6;
}
.s-scroll {
  position: absolute;
  right: -6px;
  top: 45px;
  width: 5px;
  height: 200px;
  background: #f8f9fc;
}

.chat-back {
  position: absolute;
  left: 1254px;
  top: 590px;
  width: 21px;
  height: 59px;
  background: #fff;
}
.chat-back::after {
  content: "";
  position: absolute;
  left: 4px;
  top: 10px;
  width: 6px;
  height: 8px;
  background: #b79af0;
}
.chat {
  position: absolute;
  left: 1210px;
  top: 591px;
  width: 55px;
  height: 55px;
  border: 0;
  padding: 0;
  border-radius: 50%;
  background: #0a66c2;
  display: flex;
  align-items: center;
  justify-content: center;
}
.chat svg {
  width: 24px;
  height: 24px;
  fill: none;
  stroke: #fff;
  stroke-width: 1.800;
  stroke-linejoin: round;
}
</style>
